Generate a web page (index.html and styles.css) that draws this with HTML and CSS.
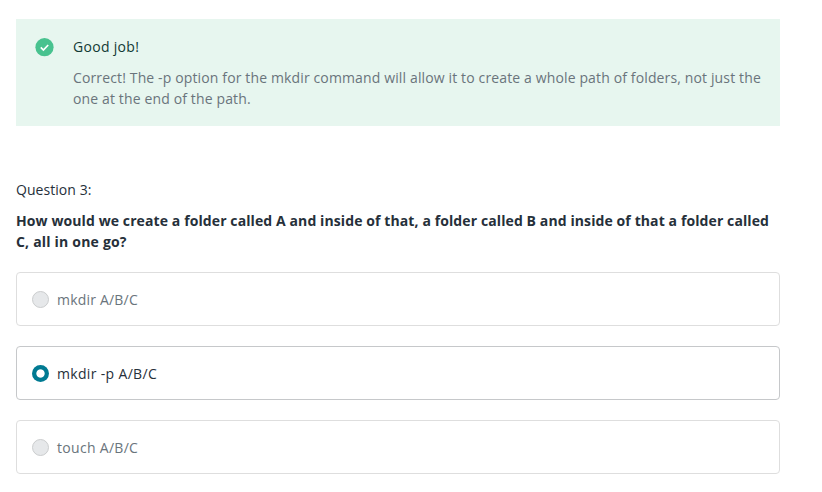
FILE: index.html
```html
<!DOCTYPE html>
<html lang="en">
<head>
<meta charset="utf-8">
<title>Quiz</title>
<link rel="stylesheet" href="styles.css">
</head>
<body>
<main class="quiz">
  <section class="feedback">
    <svg class="feedback-icon" viewBox="0 0 19 19"><circle cx="9.5" cy="9.2" r="9.1"/><path d="M5.8 9.4l2.6 2.6 4.8-5"/></svg>
    <div class="feedback-body">
      <h2 class="feedback-title"><span class="line l-title">Good job!</span></h2>
      <p class="feedback-text"><span class="line l-f1">Correct! The -p option for the mkdir command will allow it to create a whole path of folders, not just the</span><span class="line l-f2">one at the end of the path.</span></p>
    </div>
  </section>
  <section class="question">
    <p class="question-number"><span class="line l-num">Question 3:</span></p>
    <h3 class="question-text"><span class="line l-q1">How would we create a folder called A and inside of that, a folder called B and inside of that a folder called</span><span class="line l-q2">C, all in one go?</span></h3>
    <div class="options">
      <div class="option"><span class="radio"></span><span class="line l-o1">mkdir A/B/C</span></div>
      <div class="option selected"><span class="radio"></span><span class="line l-o2">mkdir -p A/B/C</span></div>
      <div class="option"><span class="radio"></span><span class="line l-o3">touch A/B/C</span></div>
    </div>
  </section>
</main>
</body>
</html>
```
FILE: styles.css
```css
* { box-sizing: border-box; }
body { margin: 0; background: #fff; font: 14px/21px "Segoe UI", "Open Sans", "Noto Sans", sans-serif; color: #26303a; }
h2, h3, p { margin: 0; font-size: inherit; font-weight: 400; }
.quiz { width: 780px; padding: 19px 0 0 16px; }
.line { display: block; width: max-content; white-space: nowrap; }
.l-title { letter-spacing: 0.3px; }
.l-f1, .l-f2 { letter-spacing: 0.134px; }
.l-num { letter-spacing: 0.05px; }
.l-q1 { letter-spacing: 0.103px; }
.l-q2 { letter-spacing: 0.2px; }
.l-o1 { letter-spacing: 0.2px; }
.l-o2 { letter-spacing: 0.33px; }
.l-o3 { letter-spacing: 0.3px; }
.feedback { display: flex; height: 107px; padding: 17px 0 0 19px; background: #e7f6ef; }
.feedback-title { color: #123a34; }
.feedback-icon { width: 19px; height: 19px; margin: 2px 19px 0 0; flex: none; }
.feedback-icon circle { fill: #48c28f; }
.feedback-icon path { fill: none; stroke: #fff; stroke-width: 1.7; }
.feedback-text { margin-top: 10px; color: #6a747c; }
.question { padding-top: 53px; }
.question-text { margin-top: 10px; font-weight: 700; }
.options { display: flex; flex-direction: column; gap: 20px; margin-top: 20px; }
.option { display: flex; align-items: center; height: 54px; padding-left: 15px; border: 1px solid #dedede; border-radius: 4px; color: #6a747c; }
.radio { width: 17px; height: 17px; margin-right: 8px; border: 1px solid #cbcdce; border-radius: 50%; background: #e6e8ea; }
.selected { border-color: #c6c8ca; color: #26303a; }
.selected .radio { border: 0; background: radial-gradient(circle, #fff 3.7px, #007a92 4.6px); }
```
